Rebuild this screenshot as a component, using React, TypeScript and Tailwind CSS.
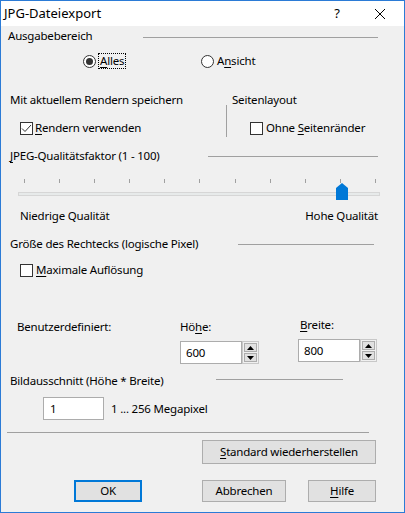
import React from 'react';

const font = { fontFamily: '"Noto Sans", "Segoe UI", sans-serif' };

// underline one access-key letter
const Key: React.FC<{ children: React.ReactNode }> = ({ children }) => (
  <span className="underline underline-offset-[1.5px] decoration-1">{children}</span>
);

const Radio: React.FC<{ checked?: boolean }> = ({ checked }) => (
  <span className="w-[13px] h-[13px] rounded-full border border-[#333] bg-white flex items-center justify-center shrink-0">
    {checked && <span className="w-[7px] h-[7px] rounded-full bg-[#333]" />}
  </span>
);

const Check: React.FC<{ checked?: boolean }> = ({ checked }) => (
  <span className="w-[13px] h-[13px] border border-[#333] bg-white flex items-center justify-center shrink-0">
    {checked && (
      <svg width="11" height="11" viewBox="0 0 11 11">
        <polyline points="1,5.5 4,8.5 10,2" fill="none" stroke="#333" strokeWidth="1" />
      </svg>
    )}
  </span>
);

const Line: React.FC<{ className: string }> = ({ className }) => (
  <div className={`h-px bg-[#a0a0a0] ${className}`} />
);

const Spinner: React.FC<{ value: string }> = ({ value }) => (
  <div className="flex h-[23px]">
    <div className="w-[62px] h-[23px] border border-[#acacac] bg-white flex items-center pl-[5px]">{value}</div>
    <div className="w-[17px] h-[23px] border border-[#c8c8c8] flex flex-col justify-center gap-px px-px">
      <div className="h-[9px] bg-[#e1e1e1] border border-[#adadad] flex items-center justify-center">
        <svg width="7" height="4" viewBox="0 0 7 4"><polygon points="3.5,0 7,4 0,4" fill="#000" /></svg>
      </div>
      <div className="h-[9px] bg-[#e1e1e1] border border-[#adadad] flex items-center justify-center">
        <svg width="7" height="4" viewBox="0 0 7 4"><polygon points="0,0 7,0 3.5,4" fill="#000" /></svg>
      </div>
    </div>
  </div>
);

const Button: React.FC<{ className: string; children: React.ReactNode }> = ({ className, children }) => (
  <div className={`h-full bg-[#e1e1e1] flex items-center justify-center ${className}`}>{children}</div>
);

export default function App() {
  const ticks = Array.from({ length: 11 });
  return (
    <div
      className="w-[405px] h-[513px] bg-[#f0f0f0] border border-[#2b7bd6] flex flex-col text-[11.5px] tracking-[-0.2px] text-black leading-none overflow-hidden"
      style={font}
    >
      {/* Title bar */}
      <div className="h-[25px] bg-white flex items-center shrink-0 text-[13px] tracking-normal">
        <span className="ml-[3px]">JPG-Dateiexport</span>
        <span className="ml-auto w-[10px] text-center">?</span>
        <svg className="ml-[32px] mr-[18px]" width="12" height="12" viewBox="0 0 12 12">
          <path d="M1 1 L11 11 M11 1 L1 11" stroke="#000" strokeWidth="1" />
        </svg>
      </div>

      {/* Ausgabebereich */}
      <div className="h-[20px] flex items-center">
        <span className="ml-[7px] w-[135px]">Ausgabebereich</span>
        <Line className="w-[235px] mt-[2px]" />
      </div>
      <div className="h-[30px] flex items-center pl-[82px]">
        <div className="w-[118px] flex items-center gap-[2px]">
          <Radio checked />
          <span className="h-[16px] px-px border border-dotted border-black flex items-center">
            <Key>A</Key>lles
          </span>
        </div>
        <div className="flex items-center gap-[3px]">
          <Radio />
          <span>
            A<Key>n</Key>sicht
          </span>
        </div>
      </div>

      {/* Rendern / Seitenlayout */}
      <div className="mt-[14px] flex">
        <div className="w-[225px]">
          <div className="h-[20px] flex items-center pl-[9px]">Mit aktuellem Rendern speichern</div>
          <div className="mt-[8px] h-[20px] flex items-center pl-[19px] gap-[2px]">
            <Check checked />
            <span>
              <Key>R</Key>endern verwenden
            </span>
          </div>
        </div>
        <div className="w-px h-[32px] mt-[15px] bg-[#a0a0a0]" />
        <div className="pl-[5px]">
          <div className="h-[20px] flex items-center">Seitenlayout</div>
          <div className="mt-[8px] h-[20px] flex items-center pl-[18px] gap-[3px]">
            <Check />
            <span>
              Ohne <Key>S</Key>eitenränder
            </span>
          </div>
        </div>
      </div>

      {/* JPEG quality */}
      <div className="mt-[8px] h-[20px] flex items-center">
        <span className="ml-[9px] w-[198px]">
          <Key>J</Key>PEG-Qualitätsfaktor (1 - 100)
        </span>
        <Line className="w-[170px]" />
      </div>
      <div className="relative h-[38px]">
        <div className="pt-[13px] ml-[23px] w-[352px] flex justify-between">
          {ticks.map((_, i) => (
            <div key={i} className="w-px h-[4px] bg-[#a0a0a0]" />
          ))}
        </div>
        <div className="mt-[9px] ml-[17px] w-[362px] h-[4px] bg-[#e7eaea] border border-[#d6d6d6]" />
        <svg className="absolute left-[335px] top-[17px]" width="12" height="17" viewBox="0 0 12 17">
          <polygon points="6,0 12,5 12,17 0,17 0,5" fill="#0078d7" />
        </svg>
      </div>
      <div className="mt-[2px] h-[20px] flex items-center justify-between pl-[19px] pr-[26px]">
        <span>Niedrige Qualität</span>
        <span>Hohe Qualität</span>
      </div>

      {/* Rechteck */}
      <div className="mt-[8px] h-[20px] flex items-center">
        <span className="ml-[9px] w-[228px]">Größe des Rechtecks (logische Pixel)</span>
        <Line className="w-[136px]" />
      </div>
      <div className="mt-[6px] h-[20px] flex items-center pl-[19px] gap-[3px]">
        <Check />
        <span>
          <Key>M</Key>aximale Auflösung
        </span>
      </div>

      <div className="mt-[35px] flex">
        <div className="w-[179px] pt-[2px]">
          <div className="h-[20px] flex items-center pl-[16px]">Benutzerdefiniert:</div>
        </div>
        <div className="w-[118px] pt-[2px]">
          <div className="h-[20px] flex items-center">
            Hö<Key>h</Key>e:
          </div>
          <div className="mt-[4px]">
            <Spinner value="600" />
          </div>
        </div>
        <div>
          <div className="h-[20px] flex items-center pl-[2px]">
            <Key>B</Key>reite:
          </div>
          <div className="mt-[4px]">
            <Spinner value="800" />
          </div>
        </div>
      </div>

      {/* Bildausschnitt */}
      <div className="mt-[7px] h-[20px] flex items-center">
        <span className="ml-[9px] w-[206px]">Bildausschnitt (Höhe * Breite)</span>
        <Line className="w-[127px] -mt-[3px]" />
      </div>
      <div className="mt-[6px] h-[23px] flex items-center">
        <div className="ml-[42px] w-[61px] h-[23px] border border-[#acacac] bg-white flex items-center pl-[6px]">1</div>
        <span className="ml-[7px]">1 ... 256 Megapixel</span>
      </div>

      <Line className="mt-[12px] ml-[6px] w-[362px]" />

      <div className="mt-[7px] h-[24px] flex">
        <Button className="ml-[201px] w-[174px] border border-[#adadad]">
          <span>
            <Key>S</Key>tandard wiederherstellen
          </span>
        </Button>
      </div>

      <div className="mt-[16px] h-[22px] flex">
        <Button className="ml-[73px] w-[68px] border-2 border-[#0078d7]">OK</Button>
        <Button className="ml-[60px] w-[84px] border border-[#adadad]">Abbrechen</Button>
        <Button className="ml-[22px] w-[68px] border border-[#adadad]">
          <span>
            <Key>H</Key>ilfe
          </span>
        </Button>
      </div>
    </div>
  );
}
